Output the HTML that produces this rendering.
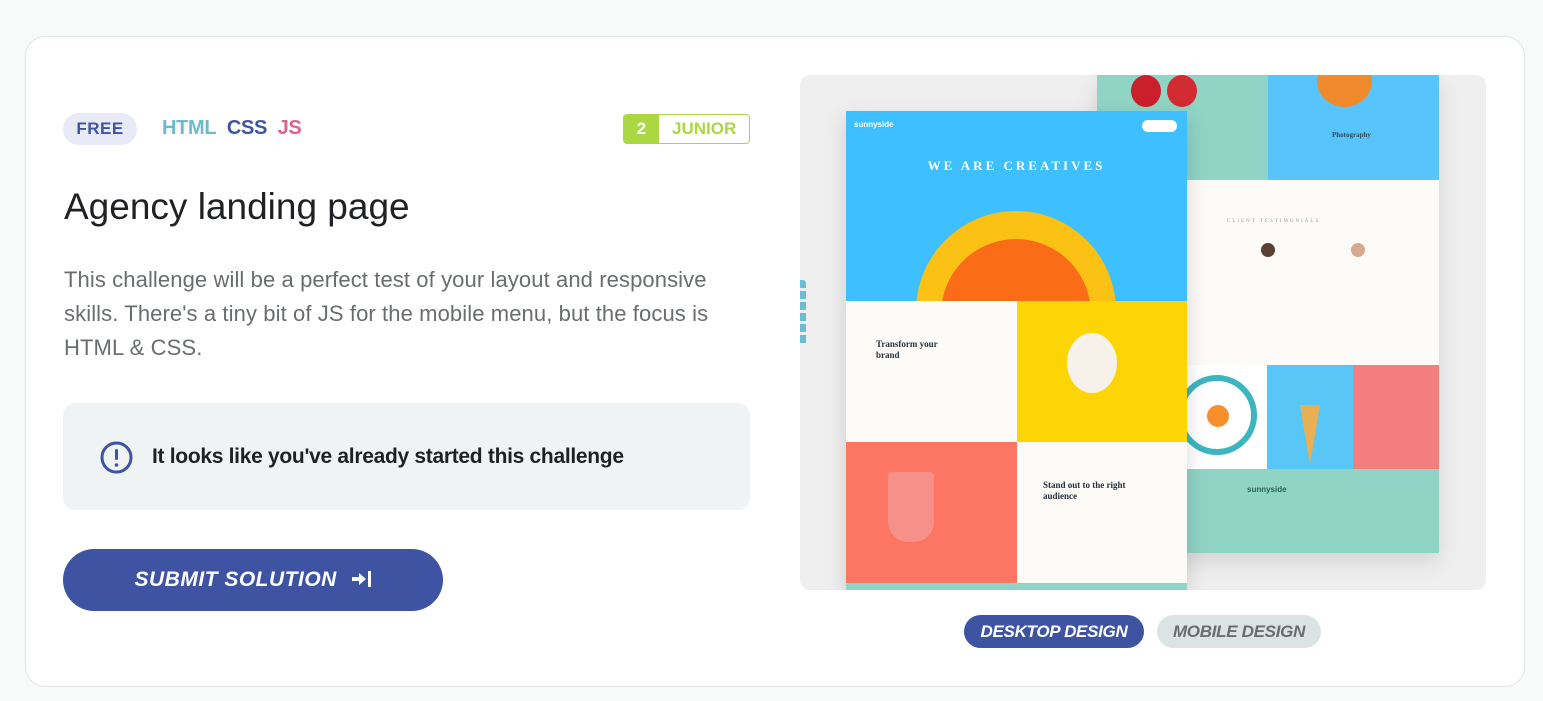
<!DOCTYPE html>
<html><head><meta charset="utf-8"><style>
*{margin:0;padding:0;box-sizing:border-box}
body{width:1543px;height:701px;background:#f8f9f9;font-family:"Liberation Sans",sans-serif;position:relative;overflow:hidden}
.card{position:absolute;left:25px;top:36px;width:1500px;height:651px;background:#fff;border:1px solid #dfe5e8;border-radius:20px}
.a{position:absolute}
.free{left:63px;top:113px;width:74px;height:32px;border-radius:16px;background:#e8eaf7;color:#3e54a3;font-weight:bold;font-size:17px;line-height:32px;text-align:center;letter-spacing:.5px}
.tags{left:162px;top:117px;font-weight:bold;font-size:20px;letter-spacing:-.3px}
.lvl{left:623px;top:114px;width:127px;height:30px;border:1px solid #aad742;border-radius:4px;overflow:hidden;font-weight:bold;font-size:17px;line-height:28px;color:#aad742}
.lvl b{display:inline-block;width:35px;background:#aad742;color:#fff;text-align:center}
h1{left:64px;top:186px;font-weight:normal;font-size:37px;color:#202124;letter-spacing:0}
.desc{left:64px;top:263px;width:665px;font-size:22px;line-height:34px;color:#6a6d70;letter-spacing:.1px}
.alert{left:63px;top:403px;width:687px;height:107px;border-radius:12px;background:#eff3f4}
.alert span{position:absolute;left:89px;top:42px;font-size:21px;font-weight:bold;color:#1f2022;letter-spacing:-.3px}
.btn{left:63px;top:549px;width:380px;height:62px;border-radius:31px;background:#3e54a3;color:#fff;font-weight:bold;font-style:italic;font-size:21px;line-height:62px;text-align:center;letter-spacing:.5px}
.img{left:800px;top:75px;width:686px;height:515px;background:#efefef;border-radius:10px;overflow:hidden}
.pill{top:615px;height:33px;border-radius:17px;font-weight:bold;font-style:italic;font-size:17px;line-height:33px;text-align:center;letter-spacing:-.3px}
</style></head><body>
<div class="card"></div>
<div class="a free">FREE</div>
<div class="a tags"><span style="color:#6bbbd0">HTML</span>&nbsp; <span style="color:#3e54a3">CSS</span>&nbsp; <span style="color:#d7638e">JS</span></div>
<div class="a lvl"><b>2</b><span style="padding-left:13px">JUNIOR</span></div>
<h1 class="a">Agency landing page</h1>
<div class="a desc">This challenge will be a perfect test of your layout and responsive skills. There's a tiny bit of JS for the mobile menu, but the focus is HTML &amp; CSS.</div>
<div class="a alert">
<svg class="a" style="left:37px;top:38px" width="33" height="33" viewBox="0 0 33 33"><circle cx="16.5" cy="16.5" r="14.5" fill="none" stroke="#3e54a3" stroke-width="3"/><rect x="15" y="8" width="3" height="11" rx="1.5" fill="#3e54a3"/><circle cx="16.5" cy="24" r="1.8" fill="#3e54a3"/></svg>
<span>It looks like you've already started this challenge</span></div>
<div class="a btn">SUBMIT SOLUTION &nbsp;<svg width="22" height="18" viewBox="0 0 22 18" style="vertical-align:-2px"><path d="M2 7h7V3l7 6-7 6v-4H2z" fill="#fff"/><rect x="18" y="1" width="3" height="16" fill="#fff"/></svg></div>

<div class="a img">
 <div class="a" style="left:297px;top:0;width:342px;height:478px;background:#fdfbf7;box-shadow:0 8px 20px rgba(0,0,0,.12)">
  <div class="a" style="left:0;top:0;width:171px;height:105px;background:#90d4c5"></div>
  <div class="a" style="left:171px;top:0;width:171px;height:105px;background:#57c5fb"></div>
  <div class="a" style="left:34px;top:0;width:30px;height:32px;border-radius:50%;background:#c9202c"></div>
  <div class="a" style="left:70px;top:0;width:30px;height:32px;border-radius:50%;background:#d22b31"></div>
  <div class="a" style="left:220px;top:-20px;width:55px;height:52px;border-radius:50%;background:#f18a2c"></div>
  <div class="a" style="left:235px;top:56px;font:bold 7px 'Liberation Serif',serif;color:#2f4a5c">Photography</div>
  <div class="a" style="left:130px;top:144px;font:5px 'Liberation Serif';letter-spacing:2px;color:#999">CLIENT TESTIMONIALS</div>
  <div class="a" style="left:164px;top:168px;width:14px;height:14px;border-radius:50%;background:#5a4030"></div>
  <div class="a" style="left:254px;top:168px;width:14px;height:14px;border-radius:50%;background:#d8a890"></div>
  <div class="a" style="left:0;top:290px;width:86px;height:104px;background:#f7991f"></div>
  <div class="a" style="left:80px;top:290px;width:90px;height:104px;background:#fff"></div>
  <div class="a" style="left:80px;top:300px;width:80px;height:80px;border-radius:50%;background:#fff;border:6px solid #3cb5c0"></div>
  <div class="a" style="left:110px;top:330px;width:22px;height:22px;border-radius:50%;background:#f7902a"></div>
  <div class="a" style="left:170px;top:290px;width:86px;height:104px;background:#58c6f6"></div>
  <div class="a" style="left:203px;top:330px;width:20px;height:60px;background:#e8b052;clip-path:polygon(0 0,100% 0,50% 100%)"></div>
  <div class="a" style="left:256px;top:290px;width:86px;height:104px;background:#f27e7e"></div>
  <div class="a" style="left:0;top:394px;width:342px;height:84px;background:#90d4c5"></div>
  <div class="a" style="left:150px;top:410px;font:bold 8px 'Liberation Sans';color:#2c6356">sunnyside</div>
 </div>
 <div class="a" style="left:46px;top:36px;width:341px;height:479px;box-shadow:0 8px 20px rgba(0,0,0,.15)">
  <div class="a" style="left:0;top:0;width:341px;height:190px;background:#3ebfff;overflow:hidden">
   <div class="a" style="left:8px;top:9px;font:bold 8px 'Liberation Sans';color:#fff">sunnyside</div>
   <div class="a" style="left:296px;top:9px;width:35px;height:12px;border-radius:6px;background:#fff"></div>
   <div class="a" style="left:0;top:47px;width:341px;text-align:center;font:bold 13px 'Liberation Serif',serif;letter-spacing:3px;color:#fff">WE ARE CREATIVES</div>
   <div class="a" style="left:70px;top:100px;width:200px;height:200px;border-radius:50%;background:#fbc114"></div>
   <div class="a" style="left:95px;top:128px;width:150px;height:150px;border-radius:50%;background:#fa6d16"></div>
  </div>
  <div class="a" style="left:0;top:190px;width:171px;height:141px;background:#fdfbf7"><div class="a" style="left:30px;top:38px;font:bold 9px 'Liberation Serif',serif;color:#24303d;line-height:11px">Transform your<br>brand</div></div>
  <div class="a" style="left:171px;top:190px;width:170px;height:141px;background:#fdd505"><div class="a" style="left:50px;top:32px;width:50px;height:60px;border-radius:50%;background:#f6f2ea"></div></div>
  <div class="a" style="left:0;top:331px;width:171px;height:141px;background:#fd7664"><div class="a" style="left:42px;top:30px;width:46px;height:70px;border-radius:4px 4px 20px 20px;background:#f8908a"></div></div>
  <div class="a" style="left:171px;top:331px;width:170px;height:141px;background:#fdfbf7"><div class="a" style="left:26px;top:38px;font:bold 9px 'Liberation Serif',serif;color:#24303d;line-height:11px">Stand out to the right<br>audience</div></div>
  <div class="a" style="left:0;top:472px;width:341px;height:7px;background:#90d4c5"></div>
 </div>
 <div class="a" style="left:0;top:205px;width:6px;height:65px;background:repeating-linear-gradient(#6cbcd4 0 8px,transparent 8px 11px);border-radius:0 3px 3px 0"></div>
</div>
<div class="a pill" style="left:964px;width:180px;background:#3e54a3;color:#fff">DESKTOP DESIGN</div>
<div class="a pill" style="left:1157px;width:164px;background:#dce3e5;color:#6a6d70">MOBILE DESIGN</div>
</body></html>
